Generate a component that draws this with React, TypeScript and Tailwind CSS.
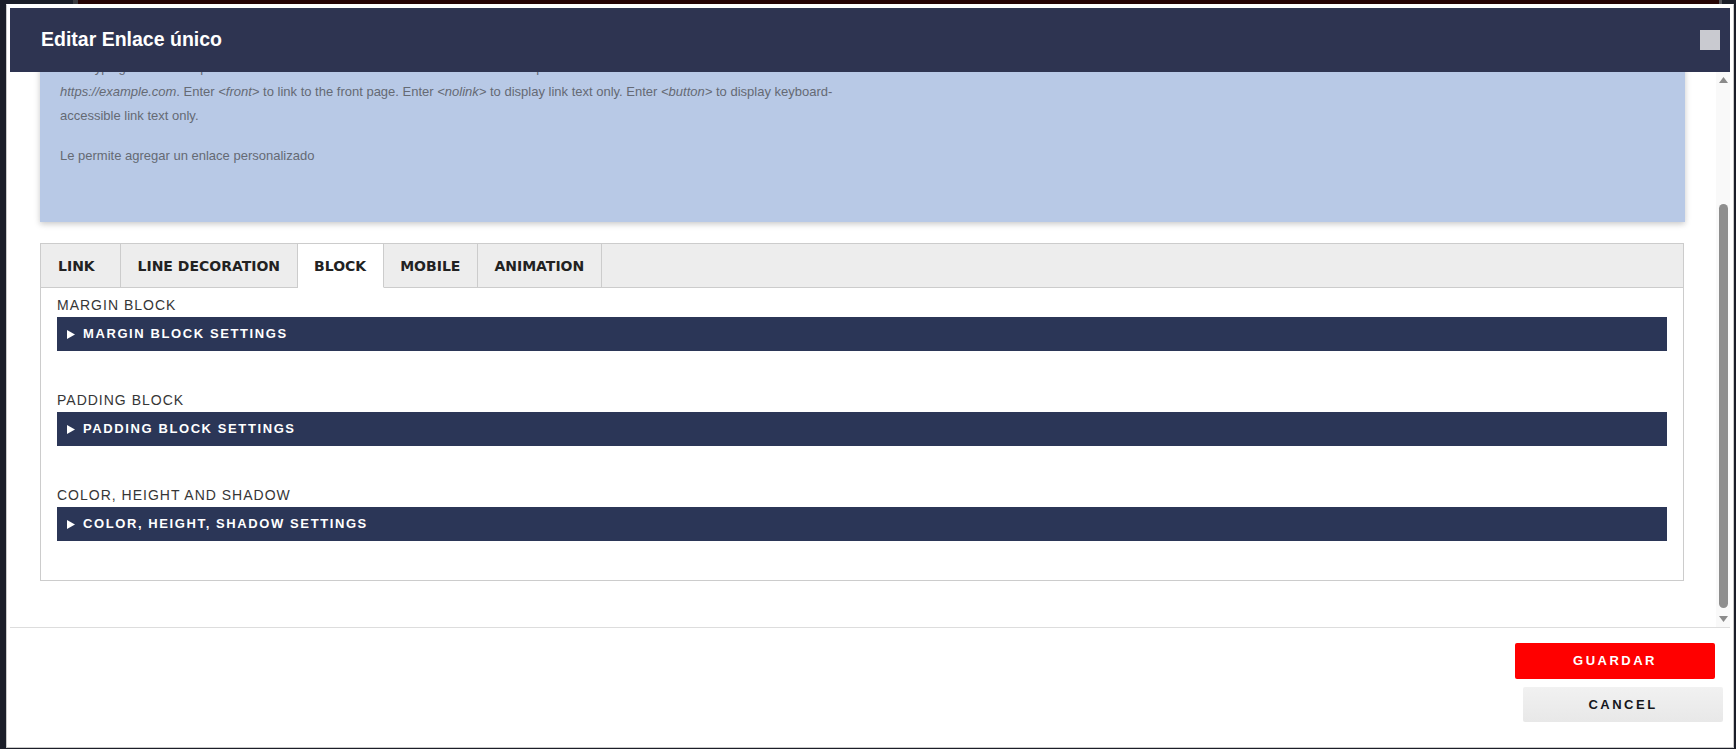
import React from "react";

function Tab({ label, active, first }: { label: string; active?: boolean; first?: boolean }) {
  return (
    <div
      className={
        "h-[44px] pt-[2px] flex items-center border-r border-b border-r-[#cccccc] font-['DejaVu_Sans',Verdana,sans-serif] text-[14px] font-bold uppercase text-[#222222] " +
        (first ? "w-[80px] pl-[17px] " : "px-[16.5px] ") +
        (active ? "bg-white border-b-white" : "border-b-[#cccccc]")
      }
    >
      {label}
    </div>
  );
}

function Group({ label, bar }: { label: string; bar: string }) {
  return (
    <div className="mb-[39px]">
      <div className="text-[14px] leading-[20px] tracking-[1px] uppercase text-[#363636] mb-[2px]">{label}</div>
      <div className="h-[34px] bg-[#2b3657] flex items-center pl-[10px] gap-[8px]">
        <svg width="8" height="9" viewBox="0 0 8 9">
          <path d="M0 0L8 4.5L0 9Z" fill="#ffffff" />
        </svg>
        <span className="text-[13px] font-bold tracking-[1.6px] uppercase text-white">{bar}</span>
      </div>
    </div>
  );
}

export default function App() {
  return (
    <div className="w-[1736px] h-[749px] bg-[#1b1e29] overflow-hidden flex flex-col font-['Liberation_Sans',Arial,sans-serif]">
      <div className="h-[4px] flex shrink-0">
        <div className="w-[73px] bg-[#1b1e29]" />
        <div className="w-[5px] bg-[#3b3b40]" />
        <div className="flex-1 bg-[#250404]" />
        <div className="w-[3px] bg-[#55565c]" />
        <div className="w-[14px] bg-[#1b1e29]" />
      </div>
      <div className="flex-1 flex pl-[6px] pr-[2px] pb-[1px] min-h-0">
        <div className="flex-1 bg-white border border-[#c9c9c9] border-t-white p-[3px] flex flex-col min-h-0">
          {/* Header */}
          <div className="h-[64px] shrink-0 bg-[#2e3451] flex items-center justify-between pl-[31px] pr-[10px]">
            <div className="text-[19.5px] font-bold text-white">Editar Enlace único</div>
            <div className="w-[20px] h-[20px] bg-[#c9cad0]" />
          </div>

          {/* Scroll area */}
          <div className="h-[555px] shrink-0 flex overflow-hidden">
            <div className="flex-1 overflow-hidden pl-[30px] pr-[31px]">
              <div className="-mt-[36px]">
                <div className="bg-[#b8c9e6] pt-[20px] px-[20px] pb-[54px] shadow-[0_2px_6px_rgba(0,0,0,0.22)]">
                  <p className="text-[13px] leading-[24px] text-[#656a74]">
                    Start typing the title of a piece of content to select it. You can also enter an internal path such as <em>/node/add</em> or an external URL such as
                    <br />
                    <em>https://example.com</em>. Enter <em>&lt;front&gt;</em> to link to the front page. Enter <em>&lt;nolink&gt;</em> to display link text only. Enter <em>&lt;button&gt;</em> to display keyboard-
                    <br />
                    accessible link text only.
                  </p>
                  <p className="mt-[16px] text-[13px] leading-[24px] text-[#656a74]">Le permite agregar un enlace personalizado</p>
                </div>

                <div className="mt-[21px] border border-[#cccccc] mr-[1px]">
                  <div className="flex bg-[#ededed]">
                    <Tab label="Link" first />
                    <Tab label="Line decoration" />
                    <Tab label="Block" active />
                    <Tab label="Mobile" />
                    <Tab label="Animation" />
                    <div className="flex-1 h-[44px] border-b border-[#cccccc]" />
                  </div>
                  <div className="px-[16px] pt-[7px]">
                    <Group label="Margin block" bar="Margin block settings" />
                    <Group label="Padding block" bar="Padding block settings" />
                    <Group label="Color, height and shadow" bar="Color, height, shadow settings" />
                  </div>
                </div>
              </div>
            </div>
            {/* Scrollbar */}
            <div className="w-[14px] bg-[#f9f9f9] flex flex-col items-center">
              <svg className="mt-[5px] shrink-0" width="9" height="6" viewBox="0 0 9 6">
                <path d="M4.5 0L9 6H0Z" fill="#8a8a8a" />
              </svg>
              <div className="h-[121px] shrink-0" />
              <div className="w-[9px] h-[404px] rounded-full bg-[#8e8e8e] shrink-0" />
              <svg className="mt-[8px] shrink-0" width="9" height="6" viewBox="0 0 9 6">
                <path d="M0 0H9L4.5 6Z" fill="#8a8a8a" />
              </svg>
            </div>
          </div>

          {/* Footer */}
          <div className="border-t border-[#dddddd] flex-1 flex flex-col items-end pt-[15px] pr-[7px]">
            <button className="w-[200px] h-[36px] mr-[8px] rounded-[2px] bg-[#ff0000] text-white text-[13px] font-bold tracking-[2.5px] uppercase">
              Guardar
            </button>
            <button className="mt-[8px] w-[200px] h-[35px] rounded-[2px] bg-gradient-to-b from-[#f1f1f1] to-[#e8e8e8] text-[#15171c] text-[13px] font-bold tracking-[2.5px] uppercase">
              Cancel
            </button>
          </div>
        </div>
      </div>
    </div>
  );
}
